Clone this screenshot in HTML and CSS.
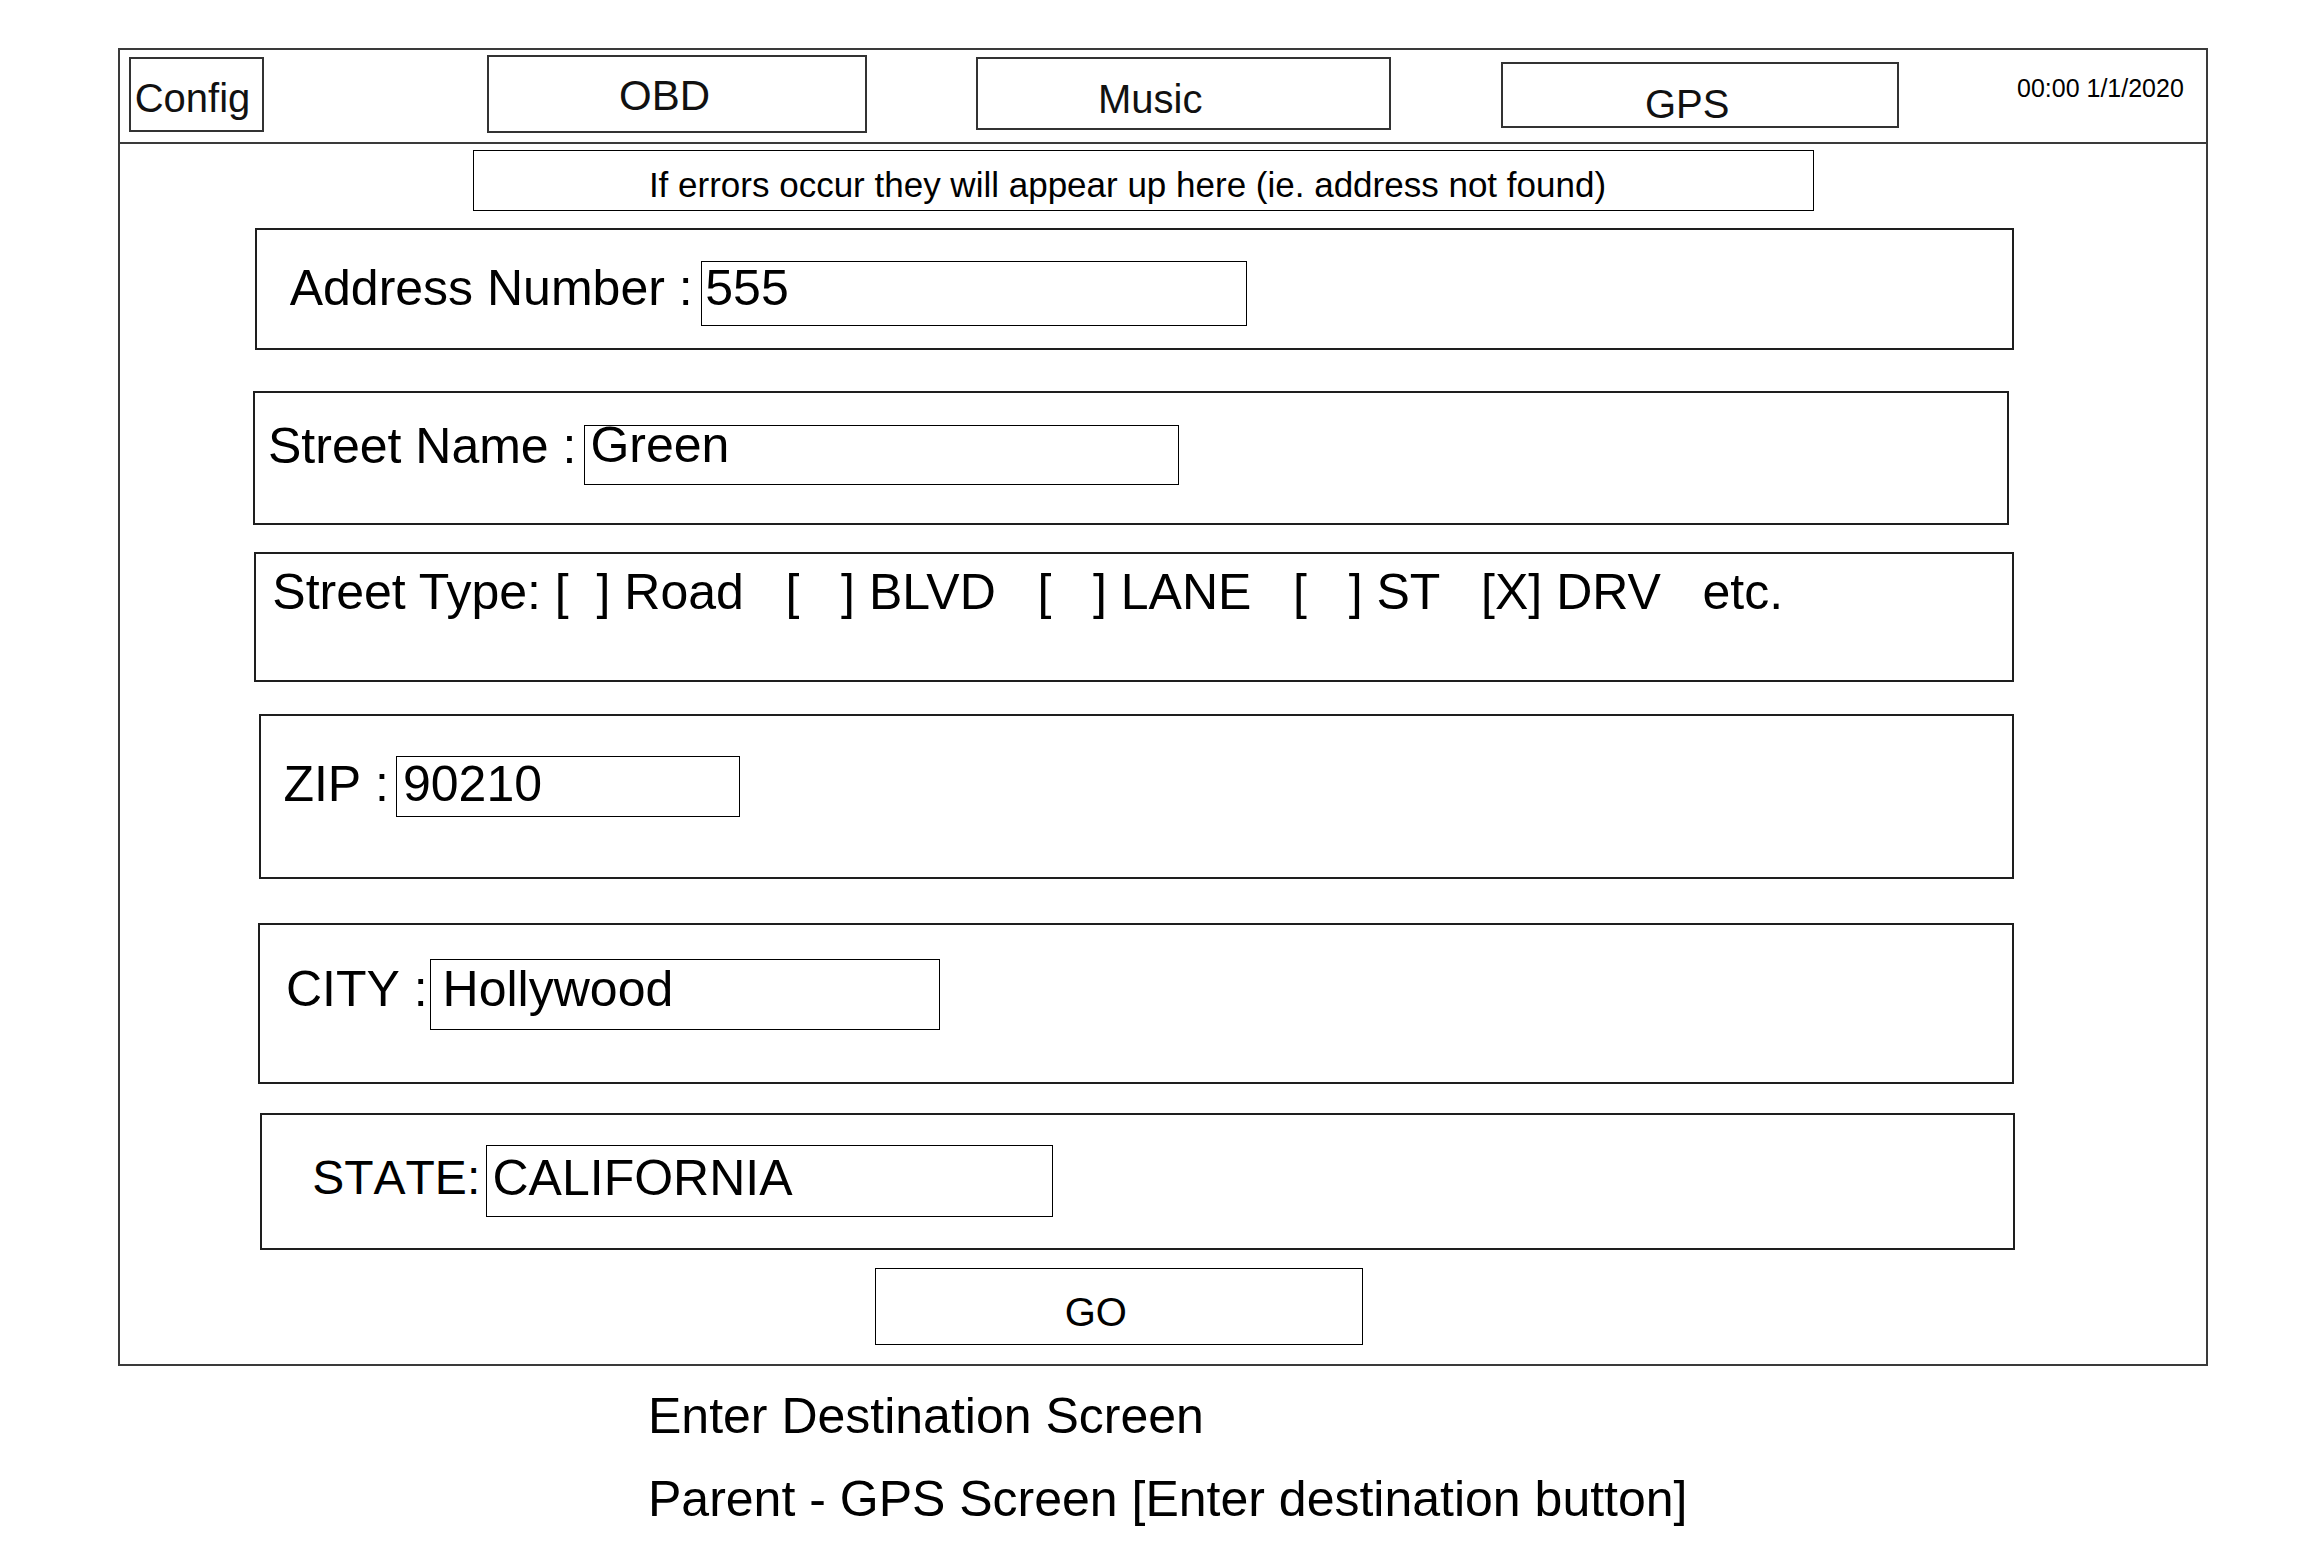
FILE: index.html
```html
<!DOCTYPE html>
<html lang="en">
<head>
<meta charset="utf-8">
<title>Enter Destination Screen</title>
<link rel="stylesheet" href="styles.css">
</head>
<body>
<div class="frame">
  <header class="topbar">
    <div class="btn btn-config">Config</div>
    <div class="btn btn-obd">OBD</div>
    <div class="btn btn-music">Music</div>
    <div class="btn btn-gps">GPS</div>
    <div class="clock">00:00 1/1/2020</div>
  </header>
  <main class="content">
    <div class="errors">If errors occur they will appear up here (ie. address not found)</div>
    <div class="row r-addr"><span class="label">Address Number :</span><span class="input in-addr">555</span></div>
    <div class="row r-street"><span class="label">Street Name :</span><span class="input in-street">Green</span></div>
    <div class="row r-type"><span class="label">Street Type: [  ] Road   [   ] BLVD   [   ] LANE   [   ] ST   [X] DRV   etc.</span></div>
    <div class="row r-zip"><span class="label">ZIP :</span><span class="input in-zip">90210</span></div>
    <div class="row r-city"><span class="label">CITY :</span><span class="input in-city">Hollywood</span></div>
    <div class="row r-state"><span class="label">STATE:</span><span class="input in-state">CALIFORNIA</span></div>
    <div class="go">GO</div>
  </main>
</div>
<div class="caption">
  <p>Enter Destination Screen</p>
  <p>Parent - GPS Screen [Enter destination button]</p>
</div>
</body>
</html>
```

FILE: styles.css
```css
html, body {
  margin: 0;
  padding: 0;
  background: #ffffff;
}

body {
  font-family: "Liberation Sans", Arial, sans-serif;
  font-kerning: none;
  color: #000000;
}

.frame {
  box-sizing: border-box;
  margin: 48px 0 0 118px;
  width: 2090px;
  height: 1318px;
  border: 2px solid #3a3a3a;
}

/* ---------- top bar ---------- */
.topbar {
  box-sizing: border-box;
  height: 94px;
  border-bottom: 2px solid #3a3a3a;
  display: flex;
  align-items: flex-start;
}

.btn {
  box-sizing: border-box;
  border: 2px solid #333333;
  white-space: nowrap;
  color: #111111;
}

.btn-config {
  margin: 7px 0 0 9px;
  width: 135px;
  height: 75px;
  padding: 15.7px 0 0 3.7px;
  font-size: 40px;
  line-height: 46px;
}

.btn-obd {
  margin: 5px 0 0 223px;
  width: 380px;
  height: 78px;
  padding: 15.4px 0 0 130px;
  font-size: 42px;
  line-height: 48px;
}

.btn-music {
  margin: 7px 0 0 109px;
  width: 415px;
  height: 73px;
  padding: 17px 0 0 120px;
  font-size: 40px;
  line-height: 46px;
}

.btn-gps {
  margin: 12px 0 0 110px;
  width: 398px;
  height: 66px;
  padding: 16.5px 0 0 142px;
  font-size: 40px;
  line-height: 46px;
}

.clock {
  margin: 24px 0 0 118px;
  font-size: 25px;
  line-height: 28px;
  white-space: nowrap;
}

/* ---------- error strip ---------- */
.errors {
  box-sizing: border-box;
  margin: 6px 0 0 352.5px;
  width: 1341px;
  height: 60.5px;
  border: 1px solid #000000;
  padding: 13.9px 0 0 175.4px;
  font-size: 35px;
  line-height: 40px;
  white-space: nowrap;
}

/* ---------- form rows ---------- */
.row {
  box-sizing: border-box;
  display: flex;
  align-items: flex-start;
  border: 2px solid #1e1e1e;
  font-size: 50px;
  line-height: 58px;
}

.label {
  white-space: pre;
}

.input {
  box-sizing: border-box;
  display: block;
  border: 1px solid #000000;
  padding-left: 4px;
  white-space: pre;
}

.r-addr {
  margin: 17.5px 0 0 134.7px;
  width: 1759px;
  height: 122px;
  padding: 29px 0 0 33px;
}
.in-addr {
  margin: 2px 0 0 8.7px;
  width: 546px;
  height: 65px;
  line-height: 53px;
  padding-left: 3px;
}

.r-street {
  margin: 41.3px 0 0 133px;
  width: 1756.3px;
  height: 134px;
  padding: 24px 0 0 13px;
}
.in-street {
  margin: 8px 0 0 8px;
  width: 595px;
  height: 60px;
  line-height: 39px;
  padding-left: 5px;
}

.r-type {
  margin: 27px 0 0 134.3px;
  width: 1759.4px;
  height: 130px;
  padding: 9px 0 0 16px;
  font-kerning: normal;
}

.r-zip {
  margin: 32px 0 0 138.9px;
  width: 1754.8px;
  height: 165px;
  padding: 39px 0 0 22.5px;
}
.in-zip {
  margin: 1px 0 0 7px;
  width: 344.5px;
  height: 61px;
  line-height: 54px;
  padding-left: 6px;
}

.r-city {
  margin: 44px 0 0 137.9px;
  width: 1755.8px;
  height: 161px;
  padding: 35px 0 0 26px;
}
.in-city {
  margin: -1px 0 0 2px;
  width: 510.7px;
  height: 71px;
  line-height: 59px;
  padding-left: 12px;
}

.r-state {
  margin: 29px 0 0 140.4px;
  width: 1754.3px;
  height: 136.7px;
  padding: 35.1px 0 0 49.8px;
  font-size: 48px;
  line-height: 56px;
}
.in-state {
  margin: -5.8px 0 0 5.3px;
  width: 567.5px;
  height: 72px;
  font-size: 50px;
  line-height: 64.75px;
  padding-left: 6px;
}

/* ---------- GO ---------- */
.go {
  box-sizing: border-box;
  margin: 18.3px 0 0 755.4px;
  width: 487.4px;
  height: 77px;
  border: 1px solid #000000;
  padding: 20.2px 0 0 188.3px;
  font-size: 40px;
  line-height: 46px;
  white-space: nowrap;
}

/* ---------- caption ---------- */
.caption {
  margin: 9px 0 0 648px;
  font-size: 50px;
  line-height: 83px;
}
.caption p {
  margin: 0;
  white-space: nowrap;
}
```
